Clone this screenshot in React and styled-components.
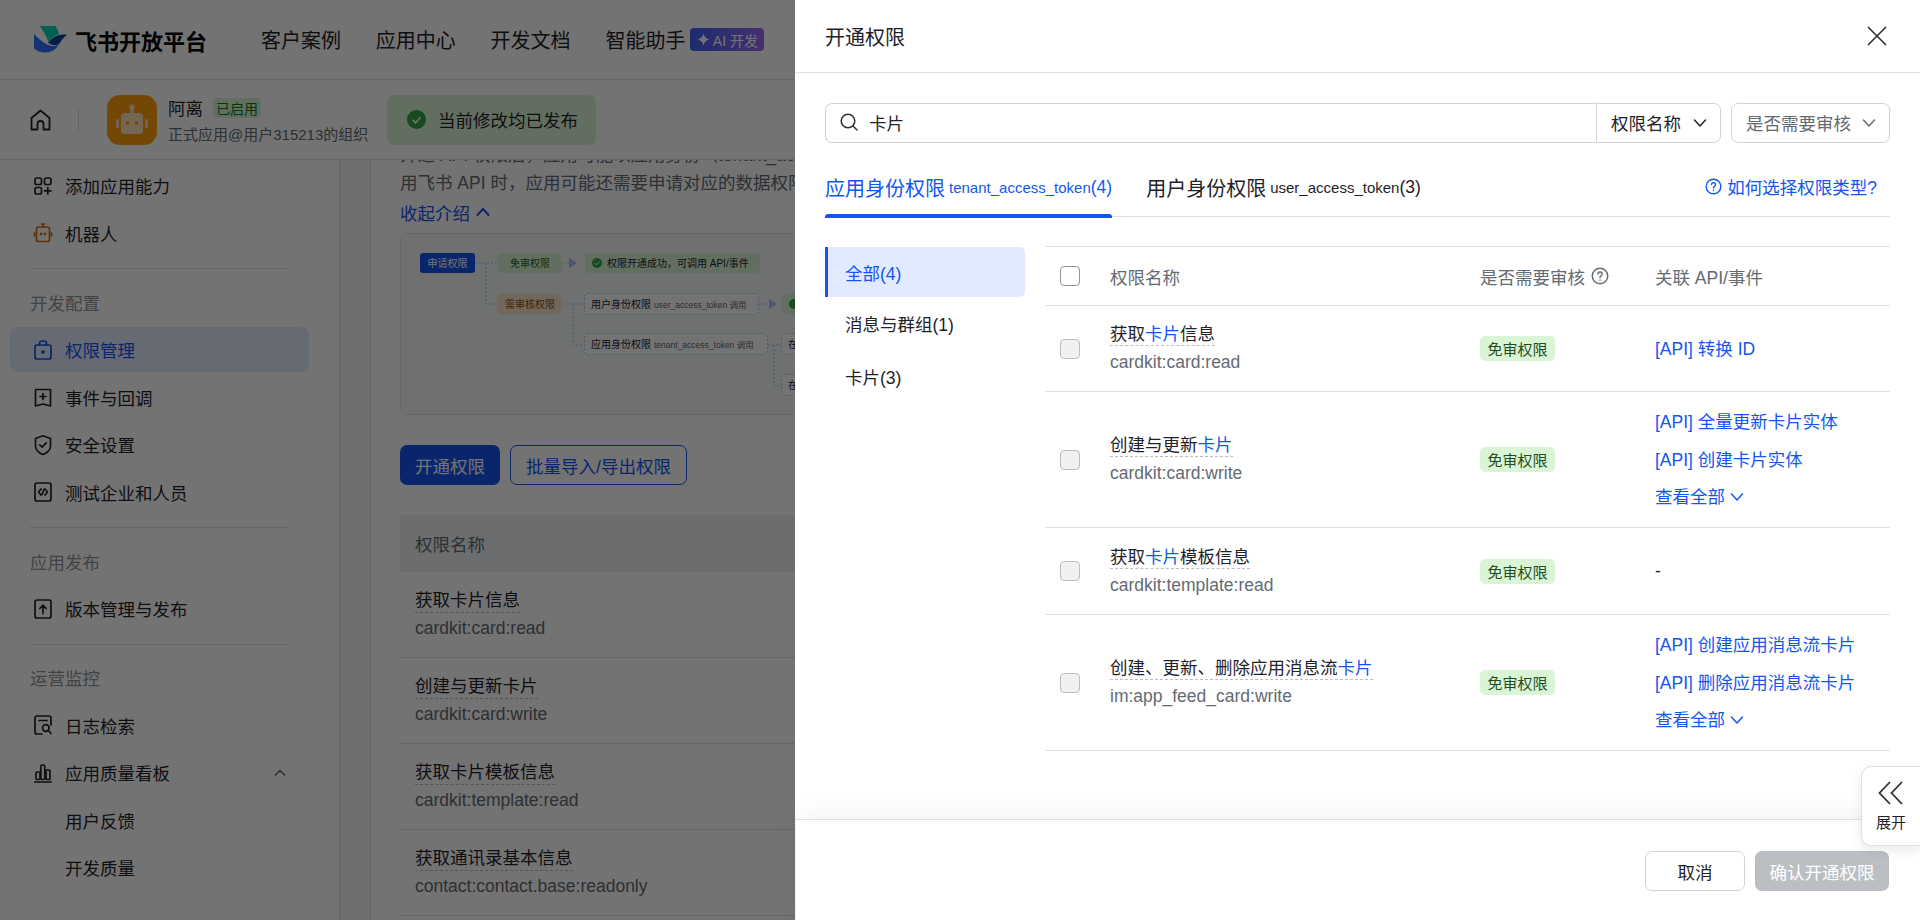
import styled, { createGlobalStyle } from 'styled-components';

const Global = createGlobalStyle`
	html, body {
		margin: 0;
		height: 100%;
		overflow: hidden;
		background: #fff;
	}
	body {
		font-family: 'Liberation Sans', 'Noto Sans CJK SC', sans-serif;
		font-size: 17.5px;
		color: #1f2329;
	}
	* {
		box-sizing: border-box;
	}
`;

const Page = styled.div`
	position: relative;
	width: 1920px;
	height: 920px;
	overflow: hidden;
	display: flex;
	flex-direction: column;
`;

/* top bar */
const TopBar = styled.header`
	flex: 0 0 80px;
	display: flex;
	align-items: center;
	padding-left: 34px;
	border-bottom: 1px solid #dee0e3;
`;

const Brand = styled.div`
	display: flex;
	align-items: center;
	gap: 7px;
	width: 227px;
	font-size: 22px;
	font-weight: 700;
	color: #000;
`;

const TopNav = styled.nav`
	display: flex;
	align-items: center;
	gap: 34.8px;
	font-size: 20px;
`;

const TopLink = styled.span`
	display: flex;
	align-items: center;
	gap: 5px;
`;

const AiBadge = styled.span`
	display: flex;
	align-items: center;
	justify-content: center;
	gap: 3px;
	width: 74px;
	height: 23px;
	border-radius: 4px;
	background: linear-gradient(90deg, #3e63f5, #9a6bf0);
	color: #fff;
	font-size: 14px;
`;

/* app bar */
const AppBar = styled.div`
	flex: 0 0 80px;
	display: flex;
	align-items: center;
	padding-left: 30px;
	border-bottom: 1px solid #dee0e3;
`;

const HomeBox = styled.div`
	display: flex;
	padding-right: 27px;
	margin-right: 28px;
	border-right: 1px solid #dee0e3;
`;

const AppIcon = styled.div`
	width: 50px;
	height: 50px;
	margin-right: 11px;
	border-radius: 13px;
	background: #ff9d0a;
	display: flex;
	align-items: center;
	justify-content: center;
`;

const AppInfo = styled.div`
	width: 219px;
`;

const AppName = styled.div`
	display: flex;
	align-items: center;
	gap: 10px;
	height: 26px;
`;

const EnabledTag = styled.span`
	display: flex;
	align-items: center;
	justify-content: center;
	width: 48px;
	height: 20px;
	border-radius: 4px;
	background: #d9f5d6;
	color: #0f7b0f;
	font-size: 14px;
`;

const AppSub = styled.div`
	margin-top: 4px;
	font-size: 15px;
	line-height: 20px;
	color: #646a73;
	white-space: nowrap;
`;

const StatusPill = styled.div`
	display: flex;
	align-items: center;
	gap: 12px;
	width: 209px;
	height: 50px;
	padding-left: 20px;
	border-radius: 7px;
	background: #d9f5d6;
`;

/* page body */
const Body = styled.div`
	flex: 1;
	display: flex;
	min-height: 0;
`;

const Sidebar = styled.aside`
	flex: 0 0 340px;
	padding: 2px 30px 0 10px;
	border-right: 1px solid #dee0e3;
`;

const NavItem = styled.div`
	display: flex;
	align-items: center;
	gap: 12px;
	height: ${(p) => (p.$active ? '45px' : '47.5px')};
	margin: ${(p) => (p.$active ? '1.25px 0' : '0')};
	padding: 0 22px 0 23px;
	border-radius: 7px;
	background: ${(p) => (p.$active ? '#e1eaff' : 'transparent')};
	color: ${(p) => (p.$active ? '#1456f0' : '#1f2329')};
	${(p) => p.$sub && 'padding-left: 55px;'}
`;

const NavIcon = styled.svg`
	flex: 0 0 20px;
	width: 20px;
	height: 22px;
	fill: none;
	stroke: currentColor;
	stroke-width: 1.7;
	stroke-linecap: round;
	stroke-linejoin: round;
`;

const Caret = styled.svg`
	margin-left: auto;
	fill: none;
	stroke: #646a73;
	stroke-width: 1.5;
`;

const SideDivider = styled.div`
	height: 1px;
	margin: 11px 21px 0 20px;
	background: #dee0e3;
`;

const SideLabel = styled.div`
	display: flex;
	align-items: center;
	height: 47.5px;
	margin-top: 9.5px;
	padding-left: 20px;
	color: #8f959e;
`;

const Gutter = styled.div`
	flex: 0 0 30px;
	background: #f2f5f6;
`;

const Content = styled.main`
	flex: 1;
	overflow: hidden;
	padding: 0 30px 0 29px;
	border-left: 1px solid #dee0e3;
`;

const Intro = styled.p`
	margin: -19px 0 0;
	width: 1400px;
	line-height: 28px;
	color: #646a73;
`;

const Collapse = styled.div`
	display: flex;
	align-items: center;
	gap: 6px;
	height: 30px;
	color: #1456f0;
`;

const Diagram = styled.div`
	width: 1400px;
	height: 182px;
	margin-top: 6px;
	border: 1px solid #dee0e3;
	border-radius: 7px;
	background: #f7fafb;
`;

const ActionRow = styled.div`
	display: flex;
	gap: 10px;
	margin-top: 30px;
`;

const PrimaryButton = styled.div`
	display: flex;
	align-items: center;
	justify-content: center;
	width: 100px;
	height: 40px;
	border-radius: 7px;
	background: #1456f0;
	color: #fff;
`;

const OutlineButton = styled(PrimaryButton)`
	width: 177px;
	background: #fff;
	border: 1px solid #1456f0;
	color: #1456f0;
`;

const PageTableHead = styled.div`
	display: flex;
	align-items: center;
	height: 57px;
	margin-top: 30px;
	padding-left: 15px;
	background: #f0f2f3;
	color: #646a73;
`;

const PageTableRow = styled.div`
	height: 86px;
	padding: 16px 0 0 15px;
	border-bottom: 1px solid #dee0e3;
`;

const RowName = styled.div`
	display: inline-block;
	line-height: 24px;
	border-bottom: 1px dashed #bbbfc4;
`;

const RowCode = styled.div`
	margin-top: 3px;
	line-height: 24px;
	color: #646a73;
`;

/* mask and drawer */
const Mask = styled.div`
	position: absolute;
	inset: 0;
	background: rgba(0, 0, 0, 0.55);
`;

const Drawer = styled.section`
	position: absolute;
	top: 0;
	right: 0;
	bottom: 0;
	width: 1125px;
	display: flex;
	flex-direction: column;
	background: #fff;
`;

const DrawerHeader = styled.div`
	flex: 0 0 73px;
	display: flex;
	align-items: center;
	justify-content: space-between;
	padding: 0 30px;
	border-bottom: 1px solid #dee0e3;
	font-size: 20px;
`;

const CloseIcon = styled.svg`
	margin-right: 3px;
	fill: none;
	stroke: #2b2f36;
	stroke-width: 1.6;
`;

const DrawerBody = styled.div`
	flex: 1;
	min-height: 0;
	padding: 30px 30px 0;
`;

const SearchRow = styled.div`
	display: flex;
	height: 40px;
`;

const SearchInput = styled.div`
	flex: 1;
	display: flex;
	align-items: center;
	gap: 11px;
	padding: 0 0 2px 14px;
	border: 1px solid #d0d3d6;
	border-right: 0;
	border-radius: 7px 0 0 7px;
`;

const SearchGlyph = styled.svg`
	fill: none;
	stroke: #2b2f36;
	stroke-width: 1.5;
	stroke-linecap: round;
`;

const Select = styled.div`
	display: flex;
	align-items: center;
	justify-content: space-between;
	width: ${(p) => p.$width}px;
	margin-left: ${(p) => p.$gap || 0}px;
	padding: 0 13px 1px 14px;
	border: 1px solid #d0d3d6;
	border-radius: ${(p) => (p.$joined ? '0 7px 7px 0' : '7px')};
	color: ${(p) => (p.$muted ? '#646a73' : '#1f2329')};
`;

const Chevron = styled.svg`
	flex: none;
	fill: none;
	stroke: currentColor;
	stroke-width: 1.5;
	stroke-linecap: round;
	stroke-linejoin: round;
`;

const TabBar = styled.div`
	display: flex;
	align-items: stretch;
	height: 74px;
	border-bottom: 1.5px solid #dee0e3;
`;

const Tab = styled.div`
	position: relative;
	display: flex;
	align-items: center;
	margin-right: 34px;
	padding-top: 14px;
	height: 74px;
	font-size: 20px;
	white-space: nowrap;
	color: ${(p) => (p.$active ? '#1456f0' : '#1f2329')};
	${(p) =>
		p.$active &&
		`&::after {
		content: '';
		position: absolute;
		left: 0;
		right: 0;
		bottom: -1px;
		height: 4px;
		border-radius: 3px 3px 0 0;
		background: #1456f0;
	}`}
`;

const TabToken = styled.span`
	margin-left: 4px;
	font-size: 15px;
`;

const TabCount = styled.span`
	font-size: 17.5px;
`;

const HelpLink = styled.div`
	margin-left: auto;
	margin-right: 13px;
	padding-top: 14px;
	display: flex;
	align-items: center;
	gap: 5px;
	color: #1456f0;
`;

const HelpIcon = styled.svg`
	fill: none;
	stroke: currentColor;
	stroke-width: 1.4;
	stroke-linecap: round;
`;

const Split = styled.div`
	display: flex;
	gap: 20px;
	margin-top: 30px;
`;

const Categories = styled.div`
	flex: 0 0 200px;
`;

const Category = styled.div`
	display: flex;
	align-items: center;
	height: ${(p) => (p.$active ? '50px' : '53px')};
	padding-left: ${(p) => (p.$active ? '17px' : '20px')};
	border-radius: 0 5px 5px 0;
	color: ${(p) => (p.$active ? '#1456f0' : '#1f2329')};
	background: ${(p) => (p.$active ? '#e1eaff' : 'transparent')};
	border-left: ${(p) => (p.$active ? '3px solid #1456f0' : '0')};
`;

const PermTable = styled.div`
	flex: 1;
	margin-top: -1px;
	border-top: 1px solid #dee0e3;
`;

const PermRow = styled.div`
	display: grid;
	grid-template-columns: 65px 370px 175px 1fr;
	align-items: center;
	height: ${(p) => p.$height}px;
	border-bottom: 1px solid #dee0e3;
`;

const HeadCell = styled.div`
	display: flex;
	align-items: center;
	gap: 6px;
	color: #646a73;
`;

const Check = styled.div`
	width: 20px;
	height: 20px;
	margin-left: 15px;
	border-radius: 4px;
	border: 1px solid ${(p) => (p.$disabled ? '#bbbfc4' : '#8f959e')};
	background: ${(p) => (p.$disabled ? '#eff0f1' : '#fff')};
`;

const PermName = styled.div`
	display: inline-block;
	line-height: 22px;
	border-bottom: 1px dashed #bbbfc4;
`;

const Hit = styled.span`
	color: #1456f0;
`;

const PermCode = styled.div`
	margin-top: 4px;
	line-height: 24px;
	color: #646a73;
`;

const FreeTag = styled.span`
	display: inline-flex;
	align-items: center;
	justify-content: center;
	width: 75px;
	height: 25px;
	border-radius: 5px;
	background: #d9f5d6;
	color: #1f4d22;
	font-size: 15px;
`;

const ApiList = styled.div`
	display: flex;
	flex-direction: column;
	gap: 11.5px;
	color: #1456f0;
	line-height: 26px;
`;

const ShowAll = styled.div`
	display: flex;
	align-items: center;
	gap: 5px;
`;

const DrawerFooter = styled.div`
	flex: 0 0 101px;
	display: flex;
	justify-content: flex-end;
	gap: 10px;
	padding: 31px 31px 0 0;
	border-top: 1px solid #dee0e3;
	border-left: 1px solid #eff0f1;
	box-shadow: 0 -8px 20px rgba(31, 35, 41, 0.04);
`;

const CancelButton = styled.div`
	display: flex;
	align-items: center;
	justify-content: center;
	width: 100px;
	height: 40px;
	border: 1px solid #d0d3d6;
	border-radius: 7px;
`;

const ConfirmButton = styled(CancelButton)`
	width: 134px;
	border: 0;
	background: #bbbfc4;
	color: #fff;
`;

const FloatTab = styled.div`
	position: absolute;
	right: 0;
	top: 766px;
	width: 59px;
	height: 80px;
	display: flex;
	flex-direction: column;
	align-items: center;
	gap: 8px;
	padding-top: 14px;
	background: #fff;
	border: 1px solid #dee0e3;
	border-right: 0;
	border-radius: 10px 0 0 10px;
	box-shadow: 0 4px 12px rgba(31, 35, 41, 0.1);
	font-size: 15px;
	line-height: 20px;
`;

const navIcons = {
	add: (
		<>
			<rect x="2" y="3" width="6.5" height="6.5" rx="1.8" />
			<rect x="11.5" y="3" width="6.5" height="6.5" rx="1.8" />
			<rect x="2" y="12.5" width="6.5" height="6.5" rx="1.8" />
			<path d="M14.8 12.5v6.5M11.5 15.8H18" />
		</>
	),
	lock: (
		<>
			<rect x="2" y="6" width="16" height="14" rx="2" />
			<path d="M6.5 6V4.5A2.5 2.5 0 0 1 9 2h2a2.5 2.5 0 0 1 2.5 2.5V6" />
			<circle cx="10" cy="13" r="1" fill="currentColor" />
		</>
	),
	event: (
		<>
			<path d="M2.5 3.5h15v16.5l-7.5-2-7.5 2z" />
			<path d="M10 7.5v6M7 10.5h6" />
		</>
	),
	shield: (
		<>
			<path d="M10 1.8l7.5 2.7v8c0 3.5-4 6.7-7.5 8-3.5-1.3-7.5-4.500-7.5-8v-8z" />
			<path d="M6.800 10.800l2.300 2.300 4.200-4.300" />
		</>
	),
	code: (
		<>
			<rect x="2" y="2" width="16" height="18" rx="2" />
			<path d="M8 8l-2.500 3L8 14M12 8l2.500 3L12 14M10.800 8.500l-1.600 5" />
		</>
	),
	upload: (
		<>
			<rect x="2" y="2" width="16" height="18" rx="2" />
			<path d="M10 15.500V7.500M6.800 10.500L10 7.200l3.200 3.300" />
		</>
	),
	log: (
		<>
			<path d="M9 20H4a2 2 0 0 1-2-2V4a2 2 0 0 1 2-2h12a2 2 0 0 1 2 2v7" />
			<path d="M6 6.500h8" />
			<circle cx="12.800" cy="14" r="3.300" />
			<path d="M15.300 16.500l2.700 3" />
		</>
	),
	chart: (
		<>
			<path d="M1.800 20h16.400" />
			<rect x="3" y="10" width="4" height="7.500" rx="1" />
			<rect x="7.800" y="3" width="4" height="14.500" rx="1.500" />
			<rect x="13" y="8" width="4" height="9.500" rx="1" />
		</>
	),
};

const SideIcon = ({ name }) => (
	<NavIcon viewBox="0 0 20 22">{navIcons[name]}</NavIcon>
);

const RobotIcon = () => (
	<NavIcon viewBox="0 0 20 22" style={{ color: '#c9701a' }}>
		<rect x="3.500" y="5" width="13" height="14.500" rx="2" />
		<path d="M10 2v3M8.500 2h3M1.500 11v3M18.500 11v3" />
		<circle cx="8" cy="12" r="0.600" fill="currentColor" />
		<circle cx="12" cy="12" r="0.600" fill="currentColor" />
	</NavIcon>
);

const ChevronDown = ({ size = 14 }) => (
	<Chevron width={size} height={size} viewBox="0 0 14 14">
		<path d="M1.500 4l5.500 6 5.500-6" />
	</Chevron>
);

const QuestionIcon = ({ size = 17 }) => (
	<HelpIcon width={size} height={size} viewBox="0 0 17 17">
		<circle cx="8.500" cy="8.500" r="7.300" />
		<path d="M6.500 6.600a2 2 0 1 1 3 1.800c-.7.400-1 .8-1 1.600" />
		<path d="M8.500 12.300v.3" />
	</HelpIcon>
);

const permissions = [
	{
		height: 86,
		name: ['获取', '信息'],
		code: 'cardkit:card:read',
		apis: ['[API] 转换 ID'],
	},
	{
		height: 136,
		name: ['创建与更新', ''],
		code: 'cardkit:card:write',
		apis: ['[API] 全量更新卡片实体', '[API] 创建卡片实体'],
		more: true,
	},
	{
		height: 87,
		name: ['获取', '模板信息'],
		code: 'cardkit:template:read',
		apis: [],
	},
	{
		height: 136,
		name: ['创建、更新、删除应用消息流', ''],
		code: 'im:app_feed_card:write',
		apis: ['[API] 创建应用消息流卡片', '[API] 删除应用消息流卡片'],
		more: true,
	},
];

const pageRows = [
	['获取卡片信息', 'cardkit:card:read'],
	['创建与更新卡片', 'cardkit:card:write'],
	['获取卡片模板信息', 'cardkit:template:read'],
	['获取通讯录基本信息', 'contact:contact.base:readonly'],
];

const FlowDiagram = () => (
	<svg width="400" height="180" viewBox="0 0 400 180" fontSize="10">
		<g fill="none" stroke="#a9bff5" strokeDasharray="2 2">
			<path d="M74 29h23M85 29v41h12M162 29h6M162 70h22M172 70v41h11M357 70h12M367 111h13M373 111v41h7" />
		</g>
		<rect x="19" y="19" width="55" height="20" rx="3" fill="#1456f0" />
		<text x="46.500" y="33" fill="#fff" textAnchor="middle">申请权限</text>
		<rect x="97" y="19" width="64" height="20" rx="3" fill="#d9f5d6" />
		<text x="129" y="33" fill="#186a1f" textAnchor="middle">免审权限</text>
		<path d="M168 24l8 5-8 5z" fill="#a9bff5" />
		<rect x="184" y="19" width="175" height="20" rx="3" fill="#d9f5d6" />
		<circle cx="196" cy="29" r="5" fill="#32a645" />
		<path d="M193.500 29l2 2 3-3.500" fill="none" stroke="#fff" strokeWidth="1" />
		<text x="206" y="33" fill="#1f2329">权限开通成功，可调用 API/事件</text>
		<rect x="97" y="60" width="64" height="20" rx="3" fill="#ffe5cc" />
		<text x="129" y="74" fill="#8f4f04" textAnchor="middle">需审核权限</text>
		<rect x="183.500" y="59.500" width="174" height="21" rx="3" fill="#fff" stroke="#a9bff5" strokeDasharray="2 2" />
		<text x="190" y="74" fill="#1f2329">用户身份权限</text>
		<text x="253" y="74" fill="#646a73" fontSize="8.500">user_access_token 调用</text>
		<path d="M368 65l8 5-8 5z" fill="#a9bff5" />
		<rect x="381" y="60" width="30" height="20" rx="3" fill="#d9f5d6" />
		<circle cx="393" cy="70" r="5" fill="#32a645" />
		<rect x="183.500" y="99.500" width="183" height="21" rx="3" fill="#fff" stroke="#a9bff5" strokeDasharray="2 2" />
		<text x="190" y="114" fill="#1f2329">应用身份权限</text>
		<text x="253" y="114" fill="#646a73" fontSize="8.500">tenant_access_token 调用</text>
		<rect x="380.500" y="99.500" width="40" height="21" rx="3" fill="#fff" stroke="#a9bff5" strokeDasharray="2 2" />
		<text x="387" y="114" fill="#1f2329">在</text>
		<rect x="380.500" y="140.500" width="40" height="21" rx="3" fill="#fff" stroke="#a9bff5" strokeDasharray="2 2" />
		<text x="387" y="155" fill="#1f2329">在</text>
	</svg>
);

const App = () => (
	<Page>
		<Global />
		<TopBar>
			<Brand>
				<svg width="34" height="27" viewBox="0 0 34 27">
					<path d="M5.500 0H21c1.500 1.500 3.500 5 4 8-4 1.500-8 4.500-10.500 8C12.500 10 9 4 5.500 0z" fill="#00d6b9" />
					<path d="M0 8c5 5 11 11 18 12 3 .5 6-1 8-3-3 5-7 9.500-15 9.500-4 0-8-1.500-11-4z" fill="#3370ff" />
					<path d="M14 17c4-5.500 11-10 19-8-2.500 1.500-4.500 4-6.500 7-2.500 3.500-6.500 3.500-9.500 2.500z" fill="#133c9a" />
				</svg>
				飞书开放平台
			</Brand>
			<TopNav>
				<TopLink>客户案例</TopLink>
				<TopLink>应用中心</TopLink>
				<TopLink>开发文档</TopLink>
				<TopLink>
					智能助手
					<AiBadge>
						<svg width="13" height="13" viewBox="0 0 13 13">
							<path d="M6.500 0c.6 3.600 2.400 5.800 6.500 6.500-4.100.7-5.900 2.900-6.500 6.500C5.900 9.400 4.100 7.200 0 6.500 4.100 5.800 5.900 3.600 6.500 0z" fill="#fff" />
						</svg>
						AI 开发
					</AiBadge>
				</TopLink>
			</TopNav>
		</TopBar>
		<AppBar>
			<HomeBox>
				<svg width="21" height="22" viewBox="0 0 21 22" fill="none" stroke="#1f2329" strokeWidth="1.800" strokeLinejoin="round">
					<path d="M1.500 9L10.500 1.500 19.500 9v11.500h-6V15a3 3 0 0 0-6 0v5.500h-6z" />
				</svg>
			</HomeBox>
			<AppIcon>
				<svg width="34" height="32" viewBox="0 0 34 32">
					<rect x="6" y="9" width="22" height="21" rx="4" fill="#ffe3bd" />
					<rect x="15.500" y="3" width="3" height="7" fill="#ffe3bd" />
					<circle cx="17" cy="3" r="2.600" fill="#ffe3bd" />
					<rect x="1" y="15" width="3" height="9" rx="1.500" fill="#ffe3bd" />
					<rect x="30" y="15" width="3" height="9" rx="1.500" fill="#ffe3bd" />
					<circle cx="12.500" cy="19" r="1.800" fill="#ff9d0a" />
					<circle cx="21.500" cy="19" r="1.800" fill="#ff9d0a" />
				</svg>
			</AppIcon>
			<AppInfo>
				<AppName>
					阿离
					<EnabledTag>已启用</EnabledTag>
				</AppName>
				<AppSub>正式应用@用户315213的组织</AppSub>
			</AppInfo>
			<StatusPill>
				<svg width="19" height="19" viewBox="0 0 19 19">
					<circle cx="9.500" cy="9.500" r="9.500" fill="#32a645" />
					<path d="M5.500 9.800l3 3 5-5.500" fill="none" stroke="#fff" strokeWidth="1.600" />
				</svg>
				当前修改均已发布
			</StatusPill>
		</AppBar>
		<Body>
			<Sidebar>
				<NavItem>
					<SideIcon name="add" />
					添加应用能力
				</NavItem>
				<NavItem>
					<RobotIcon />
					机器人
				</NavItem>
				<SideDivider />
				<SideLabel>开发配置</SideLabel>
				<NavItem $active>
					<SideIcon name="lock" />
					权限管理
				</NavItem>
				<NavItem>
					<SideIcon name="event" />
					事件与回调
				</NavItem>
				<NavItem>
					<SideIcon name="shield" />
					安全设置
				</NavItem>
				<NavItem>
					<SideIcon name="code" />
					测试企业和人员
				</NavItem>
				<SideDivider />
				<SideLabel>应用发布</SideLabel>
				<NavItem>
					<SideIcon name="upload" />
					版本管理与发布
				</NavItem>
				<SideDivider />
				<SideLabel>运营监控</SideLabel>
				<NavItem>
					<SideIcon name="log" />
					日志检索
				</NavItem>
				<NavItem>
					<SideIcon name="chart" />
					应用质量看板
					<Caret width="14" height="14" viewBox="0 0 14 14">
						<path d="M2 9.500l5-5 5 5" />
					</Caret>
				</NavItem>
				<NavItem $sub>用户反馈</NavItem>
				<NavItem $sub>开发质量</NavItem>
			</Sidebar>
			<Gutter />
			<Content>
				<Intro>
					开通 API 权限后，应用可能以应用身份（tenant_access_token）或用户身份调用对应的接口。
					<br />
					用飞书 API 时，应用可能还需要申请对应的数据权限。
				</Intro>
				<Collapse>
					收起介绍
					<Chevron width="14" height="14" viewBox="0 0 14 14" style={{ strokeWidth: 2 }}>
						<path d="M1.500 10L7 4l5.500 6" />
					</Chevron>
				</Collapse>
				<Diagram>
					<FlowDiagram />
				</Diagram>
				<ActionRow>
					<PrimaryButton>开通权限</PrimaryButton>
					<OutlineButton>批量导入/导出权限</OutlineButton>
				</ActionRow>
				<PageTableHead>权限名称</PageTableHead>
				{pageRows.map(([name, code]) => (
					<PageTableRow key={code}>
						<RowName>{name}</RowName>
						<RowCode>{code}</RowCode>
					</PageTableRow>
				))}
			</Content>
		</Body>
		<Mask />
		<Drawer>
			<DrawerHeader>
				开通权限
				<CloseIcon width="20" height="20" viewBox="0 0 20 20">
					<path d="M1 1l18 18M19 1L1 19" />
				</CloseIcon>
			</DrawerHeader>
			<DrawerBody>
				<SearchRow>
					<SearchInput>
						<SearchGlyph width="18" height="18" viewBox="0 0 18 18">
							<circle cx="8" cy="8" r="6.800" />
							<path d="M13 13l4 4" />
						</SearchGlyph>
						卡片
					</SearchInput>
					<Select $width={125} $joined>
						权限名称
						<ChevronDown />
					</Select>
					<Select $width={159} $gap={10} $muted>
						是否需要审核
						<ChevronDown />
					</Select>
				</SearchRow>
				<TabBar>
					<Tab $active>
						应用身份权限
						<TabToken>tenant_access_token</TabToken>
						<TabCount>(4)</TabCount>
					</Tab>
					<Tab>
						用户身份权限
						<TabToken>user_access_token</TabToken>
						<TabCount>(3)</TabCount>
					</Tab>
					<HelpLink>
						<QuestionIcon />
						如何选择权限类型?
					</HelpLink>
				</TabBar>
				<Split>
					<Categories>
						<Category $active>全部(4)</Category>
						<Category>消息与群组(1)</Category>
						<Category>卡片(3)</Category>
					</Categories>
					<PermTable>
						<PermRow $height={59}>
							<Check />
							<HeadCell>权限名称</HeadCell>
							<HeadCell>
								是否需要审核
								<QuestionIcon size={18} />
							</HeadCell>
							<HeadCell>关联 API/事件</HeadCell>
						</PermRow>
						{permissions.map((perm) => (
							<PermRow key={perm.code} $height={perm.height}>
								<Check $disabled />
								<div>
									<PermName>
										{perm.name[0]}
										<Hit>卡片</Hit>
										{perm.name[1]}
									</PermName>
									<PermCode>{perm.code}</PermCode>
								</div>
								<div>
									<FreeTag>免审权限</FreeTag>
								</div>
								{perm.apis.length > 0 ? (
									<ApiList>
										{perm.apis.map((api) => (
											<div key={api}>{api}</div>
										))}
										{perm.more && (
											<ShowAll>
												查看全部
												<ChevronDown />
											</ShowAll>
										)}
									</ApiList>
								) : (
									<div>-</div>
								)}
							</PermRow>
						))}
					</PermTable>
				</Split>
			</DrawerBody>
			<DrawerFooter>
				<CancelButton>取消</CancelButton>
				<ConfirmButton>确认开通权限</ConfirmButton>
			</DrawerFooter>
		</Drawer>
		<FloatTab>
			<svg width="28" height="24" viewBox="0 0 28 24" fill="none" stroke="#2b2f36" strokeWidth="1.800">
				<path d="M13 1L2.500 12 13 23M25 1L14.500 12 25 23" />
			</svg>
			展开
		</FloatTab>
	</Page>
);

export default App;
